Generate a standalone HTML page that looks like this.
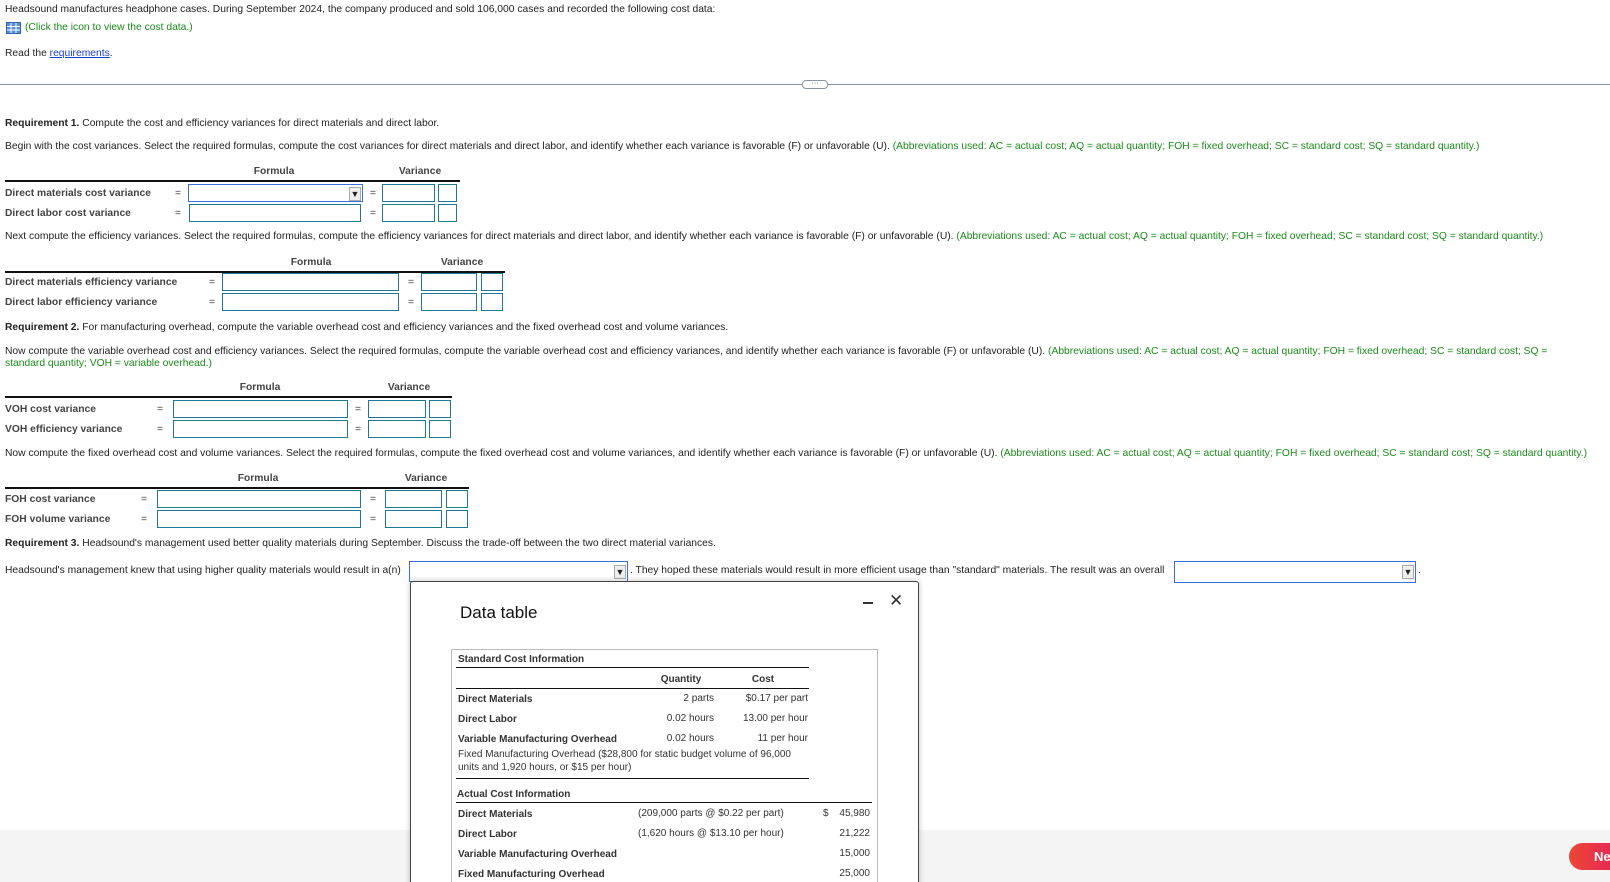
<!DOCTYPE html>
<html><head><meta charset="utf-8"><style>
html,body{margin:0;padding:0;overflow:hidden;width:1610px;height:882px}
#w{position:relative;width:1610px;height:882px;overflow:hidden;background:#fff;font-family:"Liberation Sans",Arial,sans-serif;font-size:10.3px;color:#222}
.a{position:absolute;white-space:nowrap;line-height:12px}
.g{color:#1a8a1a}
.lb{font-weight:bold;color:#444}
.h{font-weight:bold;color:#444;text-align:center}
.ln{position:absolute;height:2px;background:#111}
.bx{position:absolute;border:1px solid #1d7a92;background:#fff;box-sizing:border-box;height:18px}
.eq{position:absolute;color:#444}
.sel{position:absolute;border:1px solid #3a6fd8;background:#fff;box-sizing:border-box}
.dd{position:absolute;right:1px;top:2px;width:12px;height:14px;background:#eee;border:1px solid #aaa;box-sizing:border-box;font-size:9px;text-align:center;line-height:12px}
.m{position:absolute;font-size:10px;color:#333;white-space:nowrap;line-height:12px}
.mb{font-weight:bold}
</style></head><body><div id="w">
<div class="a" style="left:5px;top:4px">Headsound manufactures headphone cases. During September 2024, the company produced and sold 106,000 cases and recorded the following cost data:</div>
<svg style="position:absolute;left:6px;top:22px" width="15" height="12"><rect x="0.5" y="0.5" width="14" height="11" fill="#5b8fd6" stroke="#2d62b8"/><g stroke="#fff" stroke-width="1"><line x1="5" y1="1" x2="5" y2="11"/><line x1="10" y1="1" x2="10" y2="11"/><line x1="1" y1="4.5" x2="14" y2="4.5"/><line x1="1" y1="8" x2="14" y2="8"/></g></svg>
<div class="a g" style="left:25px;top:22px">(Click the icon to view the cost data.)</div>
<div class="a" style="left:5px;top:48px">Read the <span style="color:#1a3cd8;text-decoration:underline">requirements</span>.</div>
<div style="position:absolute;left:0;top:84px;width:1610px;height:1px;background:#8a93a3"></div>
<div style="position:absolute;left:802px;top:80px;width:24px;height:7px;border:1px solid #8a93a3;border-radius:4px;background:#fff;font-size:7px;line-height:5px;text-align:center">···</div>

<div class="a" style="left:5px;top:118px"><b>Requirement 1.</b> Compute the cost and efficiency variances for direct materials and direct labor.</div>
<div class="a" style="left:5px;top:141px">Begin with the cost variances. Select the required formulas, compute the cost variances for direct materials and direct labor, and identify whether each variance is favorable (F) or unfavorable (U). <span class="g">(Abbreviations used: AC = actual cost; AQ = actual quantity; FOH = fixed overhead; SC = standard cost; SQ = standard quantity.)</span></div>
<div class="a h" style="left:234px;top:166px;width:80px">Formula</div>
<div class="a h" style="left:390px;top:166px;width:60px">Variance</div>
<div class="ln" style="left:5px;top:180px;width:455px"></div>
<div class="a lb" style="left:5px;top:188px">Direct materials cost variance</div>
<div class="a lb" style="left:5px;top:208px">Direct labor cost variance</div>
<div class="eq" style="left:175px;top:188px">=</div><div class="eq" style="left:175px;top:208px">=</div>
<div class="sel" style="left:188px;top:184px;width:175px;height:18px"><div class="dd">▼</div></div>
<div class="bx" style="left:189px;top:204px;width:172px"></div>
<div class="eq" style="left:370px;top:188px">=</div><div class="eq" style="left:370px;top:208px">=</div>
<div class="bx" style="left:382px;top:184px;width:53px"></div><div class="bx" style="left:438px;top:184px;width:19px"></div>
<div class="bx" style="left:382px;top:204px;width:53px"></div><div class="bx" style="left:438px;top:204px;width:19px"></div>

<div class="a" style="left:5px;top:231px">Next compute the efficiency variances. Select the required formulas, compute the efficiency variances for direct materials and direct labor, and identify whether each variance is favorable (F) or unfavorable (U). <span class="g">(Abbreviations used: AC = actual cost; AQ = actual quantity; FOH = fixed overhead; SC = standard cost; SQ = standard quantity.)</span></div>
<div class="a h" style="left:271px;top:257px;width:80px">Formula</div>
<div class="a h" style="left:432px;top:257px;width:60px">Variance</div>
<div class="ln" style="left:5px;top:271px;width:500px"></div>
<div class="a lb" style="left:5px;top:277px">Direct materials efficiency variance</div>
<div class="a lb" style="left:5px;top:297px">Direct labor efficiency variance</div>
<div class="eq" style="left:209px;top:277px">=</div><div class="eq" style="left:209px;top:297px">=</div>
<div class="bx" style="left:222px;top:273px;width:177px"></div><div class="bx" style="left:222px;top:293px;width:177px"></div>
<div class="eq" style="left:408px;top:277px">=</div><div class="eq" style="left:408px;top:297px">=</div>
<div class="bx" style="left:421px;top:273px;width:56px"></div><div class="bx" style="left:481px;top:273px;width:22px"></div>
<div class="bx" style="left:421px;top:293px;width:56px"></div><div class="bx" style="left:481px;top:293px;width:22px"></div>

<div class="a" style="left:5px;top:322px"><b>Requirement 2.</b> For manufacturing overhead, compute the variable overhead cost and efficiency variances and the fixed overhead cost and volume variances.</div>
<div class="a" style="left:5px;top:346px">Now compute the variable overhead cost and efficiency variances. Select the required formulas, compute the variable overhead cost and efficiency variances, and identify whether each variance is favorable (F) or unfavorable (U). <span class="g">(Abbreviations used: AC = actual cost; AQ = actual quantity; FOH = fixed overhead; SC = standard cost; SQ =</span></div>
<div class="a g" style="left:5px;top:358px">standard quantity; VOH = variable overhead.)</div>
<div class="a h" style="left:220px;top:382px;width:80px">Formula</div>
<div class="a h" style="left:379px;top:382px;width:60px">Variance</div>
<div class="ln" style="left:5px;top:396px;width:447px"></div>
<div class="a lb" style="left:5px;top:404px">VOH cost variance</div>
<div class="a lb" style="left:5px;top:424px">VOH efficiency variance</div>
<div class="eq" style="left:157px;top:404px">=</div><div class="eq" style="left:157px;top:424px">=</div>
<div class="bx" style="left:173px;top:400px;width:175px"></div><div class="bx" style="left:173px;top:420px;width:175px"></div>
<div class="eq" style="left:355px;top:404px">=</div><div class="eq" style="left:355px;top:424px">=</div>
<div class="bx" style="left:368px;top:400px;width:58px"></div><div class="bx" style="left:429px;top:400px;width:22px"></div>
<div class="bx" style="left:368px;top:420px;width:58px"></div><div class="bx" style="left:429px;top:420px;width:22px"></div>

<div class="a" style="left:5px;top:448px">Now compute the fixed overhead cost and volume variances. Select the required formulas, compute the fixed overhead cost and volume variances, and identify whether each variance is favorable (F) or unfavorable (U). <span class="g">(Abbreviations used: AC = actual cost; AQ = actual quantity; FOH = fixed overhead; SC = standard cost; SQ = standard quantity.)</span></div>
<div class="a h" style="left:218px;top:473px;width:80px">Formula</div>
<div class="a h" style="left:396px;top:473px;width:60px">Variance</div>
<div class="ln" style="left:5px;top:487px;width:464px"></div>
<div class="a lb" style="left:5px;top:494px">FOH cost variance</div>
<div class="a lb" style="left:5px;top:514px">FOH volume variance</div>
<div class="eq" style="left:141px;top:494px">=</div><div class="eq" style="left:141px;top:514px">=</div>
<div class="bx" style="left:157px;top:490px;width:204px"></div><div class="bx" style="left:157px;top:510px;width:204px"></div>
<div class="eq" style="left:370px;top:494px">=</div><div class="eq" style="left:370px;top:514px">=</div>
<div class="bx" style="left:385px;top:490px;width:57px"></div><div class="bx" style="left:446px;top:490px;width:22px"></div>
<div class="bx" style="left:385px;top:510px;width:57px"></div><div class="bx" style="left:446px;top:510px;width:22px"></div>

<div class="a" style="left:5px;top:538px"><b>Requirement 3.</b> Headsound's management used better quality materials during September. Discuss the trade-off between the two direct material variances.</div>
<div class="a" style="left:5px;top:565px">Headsound's management knew that using higher quality materials would result in a(n)</div>
<div class="sel" style="left:409px;top:561px;width:219px;height:21px"><div class="dd" style="top:3px">▼</div></div>
<div class="a" style="left:630px;top:565px">. They hoped these materials would result in more efficient usage than "standard" materials. The result was an overall</div>
<div class="sel" style="left:1174px;top:561px;width:242px;height:22px"><div class="dd" style="top:3px">▼</div></div>
<div class="a" style="left:1418px;top:565px">.</div>

<div style="position:absolute;left:0;top:830px;width:1610px;height:52px;background:#f4f4f4"></div>
<div style="position:absolute;left:1569px;top:843px;width:80px;height:27px;border-radius:14px;background:linear-gradient(90deg,#ee4535,#e0126a);color:#fff;font-weight:bold;font-size:13px;line-height:27px;padding-left:25px;box-sizing:border-box">Next</div>

<div style="position:absolute;left:410px;top:581px;width:507px;height:340px;background:#fff;border:1px solid #444;border-radius:3px;box-shadow:0 0 6px rgba(0,0,0,.25)"></div>
<div class="a" style="left:460px;top:603px;font-size:17px;line-height:20px;color:#111">Data table</div>
<div style="position:absolute;left:863px;top:602px;width:10px;height:2px;background:#333"></div>
<div class="a" style="left:889px;top:592px;font-size:17px;line-height:18px;color:#333">✕</div>
<div style="position:absolute;left:451px;top:649px;width:425px;height:260px;border:1px solid #bbb"></div>
<div class="m mb" style="left:458px;top:654px">Standard Cost Information</div>
<div style="position:absolute;left:456px;top:667px;width:353px;height:1px;background:#111"></div>
<div class="m mb" style="left:650px;top:674px;width:62px;text-align:center">Quantity</div>
<div class="m mb" style="left:740px;top:674px;width:46px;text-align:center">Cost</div>
<div style="position:absolute;left:456px;top:688px;width:353px;height:1px;background:#111"></div>
<div class="m mb" style="left:458px;top:694px">Direct Materials</div>
<div class="m" style="left:640px;top:693px;width:74px;text-align:right">2 parts</div>
<div class="m" style="left:720px;top:693px;width:88px;text-align:right">$0.17 per part</div>
<div class="m mb" style="left:458px;top:714px">Direct Labor</div>
<div class="m" style="left:640px;top:713px;width:74px;text-align:right">0.02 hours</div>
<div class="m" style="left:720px;top:713px;width:88px;text-align:right">13.00 per hour</div>
<div class="m mb" style="left:458px;top:734px">Variable Manufacturing Overhead</div>
<div class="m" style="left:640px;top:733px;width:74px;text-align:right">0.02 hours</div>
<div class="m" style="left:720px;top:733px;width:88px;text-align:right">11 per hour</div>
<div class="m" style="left:458px;top:749px">Fixed Manufacturing Overhead ($28,800 for static budget volume of 96,000</div>
<div class="m" style="left:458px;top:762px">units and 1,920 hours, or $15 per hour)</div>
<div style="position:absolute;left:456px;top:778px;width:353px;height:1px;background:#111"></div>
<div class="m mb" style="left:457px;top:789px">Actual Cost Information</div>
<div style="position:absolute;left:456px;top:802px;width:416px;height:1px;background:#111"></div>
<div class="m mb" style="left:458px;top:809px">Direct Materials</div>
<div class="m" style="left:638px;top:808px">(209,000 parts @ $0.22 per part)</div>
<div class="m" style="left:823px;top:808px">$</div><div class="m" style="left:820px;top:808px;width:50px;text-align:right">45,980</div>
<div class="m mb" style="left:458px;top:829px">Direct Labor</div>
<div class="m" style="left:638px;top:828px">(1,620 hours @ $13.10 per hour)</div>
<div class="m" style="left:820px;top:828px;width:50px;text-align:right">21,222</div>
<div class="m mb" style="left:458px;top:849px">Variable Manufacturing Overhead</div>
<div class="m" style="left:820px;top:848px;width:50px;text-align:right">15,000</div>
<div class="m mb" style="left:458px;top:869px">Fixed Manufacturing Overhead</div>
<div class="m" style="left:820px;top:868px;width:50px;text-align:right">25,000</div>
</div></body></html>
